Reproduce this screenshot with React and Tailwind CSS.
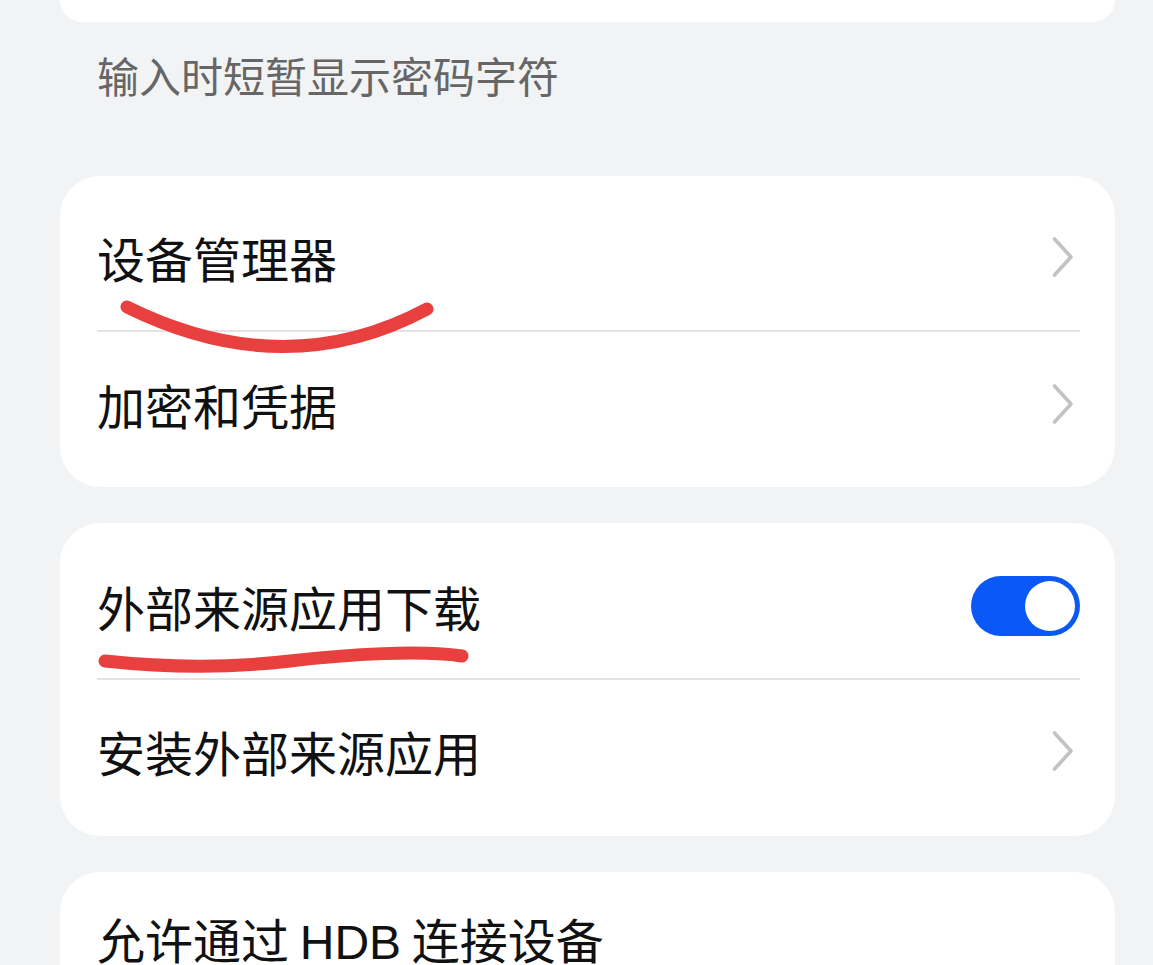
import React from "react";

function Chevron() {
  return (
    <svg width="24" height="42" viewBox="0 0 24 42" className="shrink-0 mr-[5px]">
      <path
        d="M3.5 3 L20 21 L3.5 39"
        fill="none"
        stroke="#c2c2c2"
        strokeWidth="3.6"
        strokeLinecap="round"
        strokeLinejoin="round"
      />
    </svg>
  );
}

function Toggle() {
  return (
    <div className="w-[109px] h-[60px] rounded-full bg-[#0a59f7] flex items-center justify-end pr-[5px] shrink-0">
      <div className="w-[50px] h-[50px] rounded-full bg-white" />
    </div>
  );
}

function Row({ label, right, divider, h }) {
  return (
    <div className={`${h} flex items-center justify-between pl-[37px] pr-[35px] relative`}>
      <span className="text-[48px] font-normal text-[#111111] leading-none">
        {label}
      </span>
      {right}
      {divider && (
        <div className="absolute left-[37px] right-[35px] bottom-0 h-[2px] bg-[#e3e3e3]" />
      )}
    </div>
  );
}

export default function App() {
  return (
    <div
      className="relative w-[1153px] h-[965px] overflow-hidden bg-[#f1f3f5]"
      style={{ fontFamily: '"Noto Sans CJK SC", "Noto Sans", sans-serif' }}
    >
      <div className="ml-[60px] w-[1055px] h-[22px] bg-white rounded-b-[40px]" />

      <div className="pl-[97px] pt-[32px] h-[154px]">
        <span className="text-[42px] text-[#666666] leading-none">
          输入时短暂显示密码字符
        </span>
      </div>

      <div className="ml-[60px] w-[1055px] bg-white rounded-[40px] overflow-hidden">
        <Row label="设备管理器" right={<Chevron />} divider h="h-[156px] pt-[6px]" />
        <Row label="加密和凭据" right={<Chevron />} h="h-[155px] pb-[12px]" />
      </div>

      <div className="mt-[36px] ml-[60px] w-[1055px] bg-white rounded-[40px] overflow-hidden">
        <Row label="外部来源应用下载" right={<Toggle />} divider h="h-[157px] pt-[8px]" />
        <Row label="安装外部来源应用" right={<Chevron />} h="h-[156px] pb-[14px]" />
      </div>

      <div className="mt-[36px] ml-[60px] w-[1055px] bg-white rounded-[40px] overflow-hidden">
        <Row
          label={
            <>
              允许通过 <span className="font-['Liberation_Sans']">HDB</span> 连接设备
            </>
          }
          right={null}
          h="h-[136px]"
        />
      </div>

      <svg
        className="absolute inset-0 pointer-events-none"
        width="1153"
        height="965"
        viewBox="0 0 1153 965"
      >
        <path
          d="M127 307 Q 285 385 427 309"
          fill="none"
          stroke="#e8403f"
          strokeWidth="13"
          strokeLinecap="round"
        />
        <path
          d="M105 661 C 170 668, 230 668, 290 661 S 420 650, 462 656"
          fill="none"
          stroke="#e8403f"
          strokeWidth="13"
          strokeLinecap="round"
        />
      </svg>
    </div>
  );
}
